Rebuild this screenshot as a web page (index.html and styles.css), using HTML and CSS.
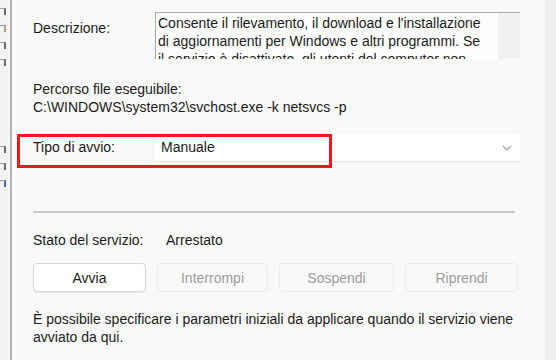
FILE: index.html
```html
<!DOCTYPE html>
<html lang="it">
<head>
  <meta charset="UTF-8">
  <title>Proprietà servizio</title>
  <link rel="stylesheet" href="styles.css">
</head>
<body>
  <div class="window">
    <div class="edge">
      <i class="mark"></i><i class="mark tan"></i><i class="mark"></i><i class="mark"></i>
      <i class="gap"></i>
      <i class="mark"></i><i class="mark"></i><i class="mark blue"></i>
    </div>

    <div class="panel">
      <div class="row-desc">
        <div class="label">Descrizione:</div>
        <div class="desc-box">
          <div class="desc-text">Consente il rilevamento, il download e l'installazione di aggiornamenti per Windows e altri programmi. Se il servizio è disattivato, gli utenti del computer non potranno utilizzare Windows Update.</div>
          <div class="scroll-track"></div>
        </div>
      </div>

      <div class="path">
        <div>Percorso file eseguibile:</div>
        <div>C:\WINDOWS\system32\svchost.exe -k netsvcs -p</div>
      </div>

      <div class="row-start">
        <div class="label">Tipo di avvio:</div>
        <div class="combo">
          <span>Manuale</span>
          <svg class="chevron" width="10" height="6" viewBox="0 0 10 6"><path d="M1 1l4 4 4-4" fill="none" stroke="#9a9a9a" stroke-width="1.2"/></svg>
        </div>
        <div class="highlight"></div>
      </div>

      <hr class="sep">

      <div class="row-state">
        <div>Stato del servizio:</div>
        <div>Arrestato</div>
      </div>

      <div class="buttons">
        <button class="btn">Avvia</button>
        <button class="btn" disabled>Interrompi</button>
        <button class="btn" disabled>Sospendi</button>
        <button class="btn" disabled>Riprendi</button>
      </div>

      <p class="note">È possibile specificare i parametri iniziali da applicare quando il servizio viene avviato da qui.</p>
    </div>

    <div class="side"></div>
  </div>
</body>
</html>
```

FILE: styles.css
```css
* { margin: 0; padding: 0; box-sizing: border-box; }
html, body { width: 556px; height: 360px; overflow: hidden; }
body { font-family: "Liberation Sans", Arial, sans-serif; font-size: 14px; line-height: 18px; color: #1a1a1a; background: #f0f0f0; }

.window { display: flex; height: 360px; }

/* window behind, only its edge shows */
.edge { width: 12px; flex: none; background: #f3f3f3; border-right: 2px solid #b4b4b4; display: flex; flex-direction: column; padding-top: 8px; }
.edge .mark { display: block; width: 6px; height: 7px; margin-bottom: 10px; border-right: 2px solid #6a6a6a; border-top: 1px solid #9a9a9a; }
.edge .mark.tan { border-right-color: #b59a70; }
.edge .mark.blue { border-right-color: #3d6fb0; }
.edge .gap { display: block; height: 70px; }

.panel { flex: 1; background: #f9f9f9; padding: 0 25px 0 21px; position: relative; }
.side { width: 11px; flex: none; background: #efefef; }

.label { white-space: nowrap; }

.row-desc { display: grid; grid-template-columns: 122px 1fr; margin-top: 12px; }
.row-desc .label { padding-top: 7px; }
.desc-box { height: 47px; background: #fdfdfd; border-top: 1px solid #a8a8a8; border-left: 1px solid #a8a8a8; display: flex; overflow: hidden; }
.desc-text { flex: 1; padding: 1px 12px 0 2px; }
.scroll-track { width: 22px; flex: none; background: #f1f1f1; }

.path { margin-top: 21px; }

.row-start { display: grid; grid-template-columns: 122px 1fr; margin-top: 18px; line-height: 27px; position: relative; }
.combo { height: 27px; background: #fff; border-radius: 3px; box-shadow: 0 1px 1px rgba(0,0,0,0.08); display: flex; align-items: center; justify-content: space-between; padding: 0 8px 0 6px; }
.chevron { display: block; }
.highlight { position: absolute; left: -16px; top: 0; width: 315px; height: 34px; border: 3px solid #f01818; pointer-events: none; }

.sep { border: none; border-top: 2px solid #c6c6c6; margin: 50px 0 0 0; width: 482px; }

.row-state { display: grid; grid-template-columns: 133px 1fr; margin-top: 18px; }

.buttons { display: grid; grid-template-columns: 113px 111px 115px 113px; column-gap: 11px; margin-top: 14px; }
.btn { height: 29px; font-family: inherit; font-size: 14px; color: #1a1a1a; background: #fff; border: 1px solid #d6d6d6; border-radius: 4px; box-shadow: 0 1px 0 rgba(0,0,0,0.06); }
.btn:disabled { color: #9c9c9c; background: #f9f9f9; border-color: #ececec; box-shadow: none; }

.note { margin-top: 18px; }
```
